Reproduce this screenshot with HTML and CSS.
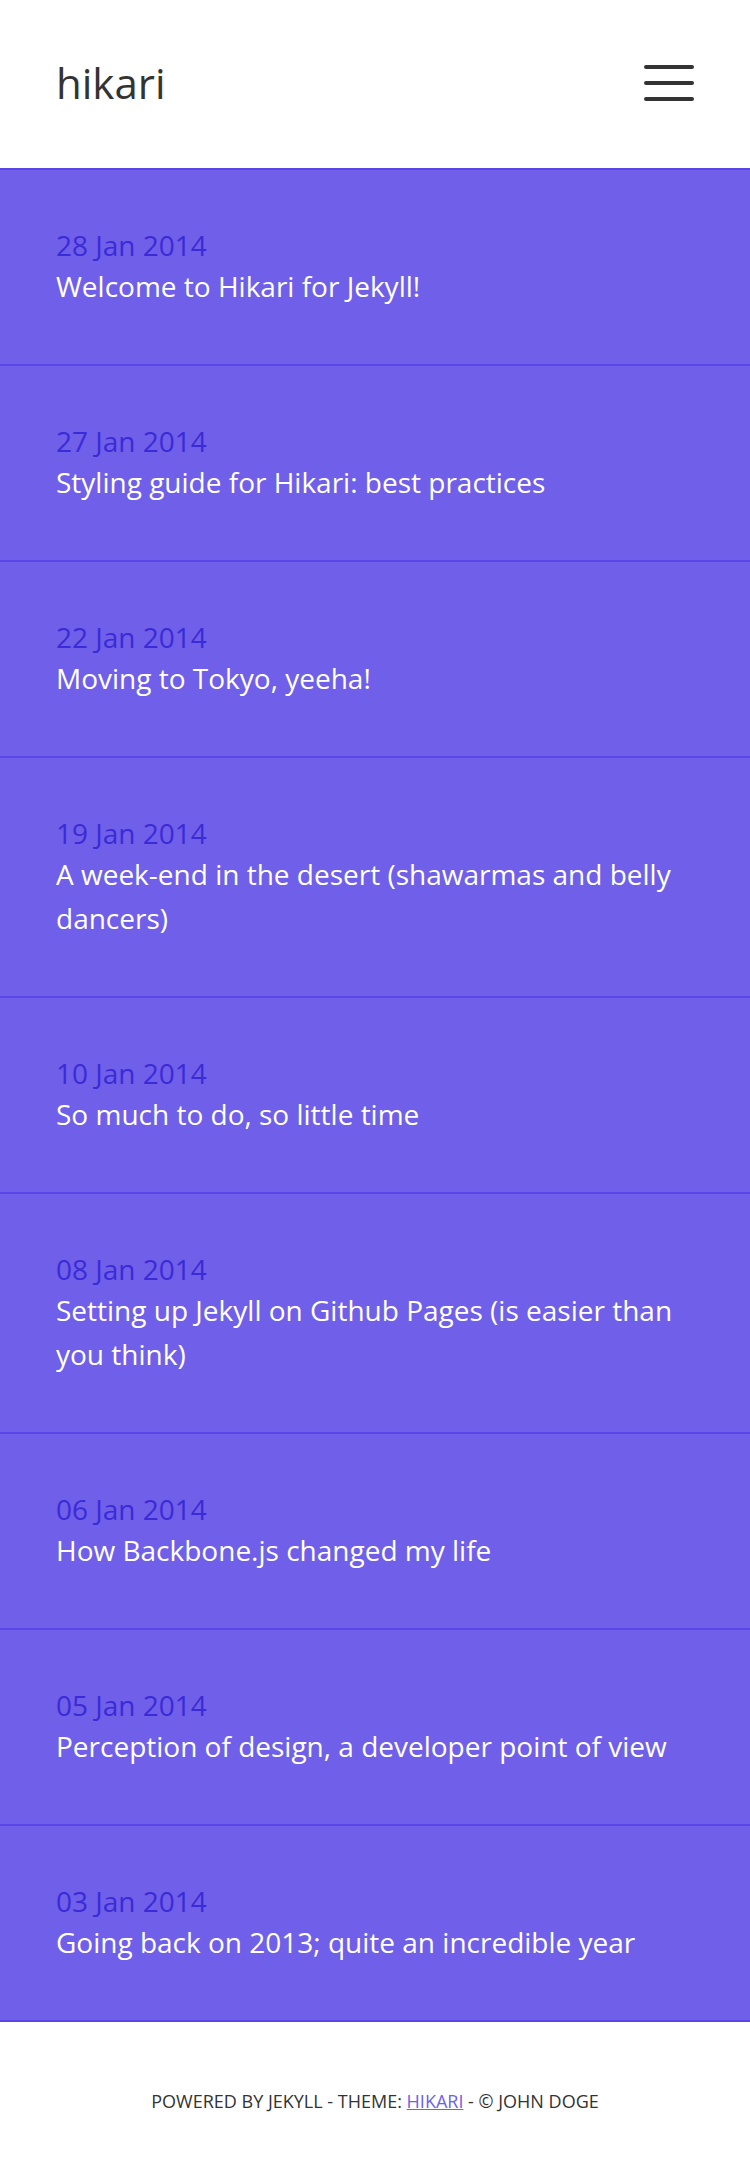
FILE: index.html
```html
<!DOCTYPE html>
<html lang="en">
<head>
<meta charset="utf-8">
<title>hikari</title>
<link rel="stylesheet" href="styles.css">
</head>
<body>
<header class="site-header">
  <a class="site-title" href="#">hikari</a>
  <button class="menu-toggle" aria-label="Menu">
    <svg width="50" height="36" viewBox="0 0 50 36">
      <line x1="2" y1="2" x2="48" y2="2" />
      <line x1="2" y1="18" x2="48" y2="18" />
      <line x1="2" y1="34" x2="48" y2="34" />
    </svg>
  </button>
</header>
<main class="post-list">
  <a class="post" href="#"><span class="post-date">28 Jan 2014</span><span class="post-title">Welcome to Hikari for Jekyll!</span></a>
  <a class="post" href="#"><span class="post-date">27 Jan 2014</span><span class="post-title">Styling guide for Hikari: best practices</span></a>
  <a class="post" href="#"><span class="post-date">22 Jan 2014</span><span class="post-title">Moving to Tokyo, yeeha!</span></a>
  <a class="post" href="#"><span class="post-date">19 Jan 2014</span><span class="post-title">A week-end in the desert (shawarmas and belly dancers)</span></a>
  <a class="post" href="#"><span class="post-date">10 Jan 2014</span><span class="post-title">So much to do, so little time</span></a>
  <a class="post" href="#"><span class="post-date">08 Jan 2014</span><span class="post-title">Setting up Jekyll on Github Pages (is easier than you think)</span></a>
  <a class="post" href="#"><span class="post-date">06 Jan 2014</span><span class="post-title">How Backbone.js changed my life</span></a>
  <a class="post" href="#"><span class="post-date">05 Jan 2014</span><span class="post-title">Perception of design, a developer point of view</span></a>
  <a class="post" href="#"><span class="post-date">03 Jan 2014</span><span class="post-title">Going back on 2013; quite an incredible year</span></a>
</main>
<footer class="site-footer">
  Powered by Jekyll - Theme: <a class="footer-link" href="#">hikari</a> - © John Doge
</footer>
</body>
</html>
```

FILE: styles.css
```css
* {
  box-sizing: border-box;
}

html, body {
  margin: 0;
  padding: 0;
  background: #ffffff;
}

body {
  font-family: "Open Sans", "Noto Sans", sans-serif;
  color: #333333;
  font-size: 28px;
}

a {
  text-decoration: none;
}

.site-header {
  height: 170px;
  padding: 0 56px;
  display: flex;
  align-items: center;
  justify-content: space-between;
  border-bottom: 2px solid #5a46e6;
  background: #ffffff;
}

.site-title {
  font-size: 42px;
  line-height: 1;
  color: #333333;
  font-weight: 400;
  margin-top: -2px;
}

.menu-toggle {
  border: 0;
  background: none;
  padding: 0;
  margin: 0;
  display: flex;
  margin-top: -2px;
}

.menu-toggle line {
  stroke: #333333;
  stroke-width: 4;
  stroke-linecap: round;
}

.post-list {
  display: flex;
  flex-direction: column;
  background: #6f5fe9;
}

.post {
  display: flex;
  flex-direction: column;
  padding: 56px 56px;
  border-bottom: 2px solid #5a46e6;
}

.post-date {
  font-size: 28px;
  line-height: 38px;
  color: #3b2bd6;
}

.post-title {
  font-size: 28px;
  line-height: 44px;
  color: #ffffff;
}

.site-footer {
  padding: 66px 0 58px;
  text-align: center;
  text-transform: uppercase;
  font-size: 18px;
  line-height: 26px;
  color: #333333;
}

.footer-link {
  color: #6f5fe9;
  text-decoration: underline;
}
```
